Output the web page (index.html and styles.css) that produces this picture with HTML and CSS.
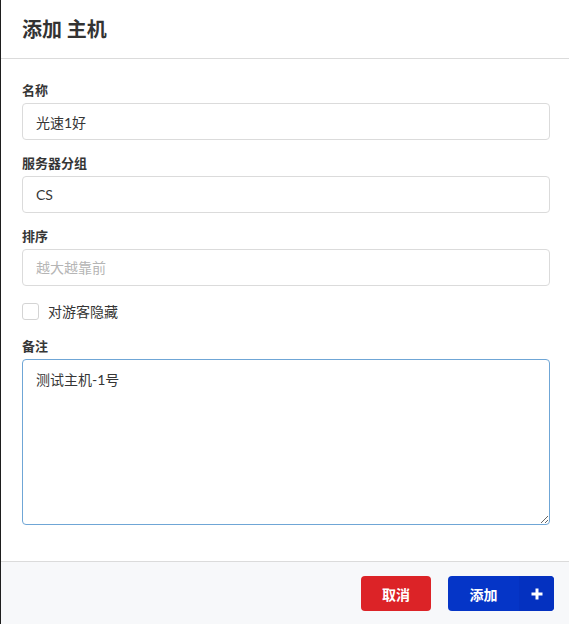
FILE: index.html
```html
<!DOCTYPE html>
<html lang="zh">
<head>
<meta charset="utf-8">
<title>添加 主机</title>
<link rel="stylesheet" href="styles.css">
</head>
<body>
<div class="modal">
  <header class="modal-head">
    <h1 class="modal-title">添加 主机</h1>
  </header>
  <section class="modal-body">
    <div class="field">
      <label class="label">名称</label>
      <input class="input" type="text" value="光速1好">
    </div>
    <div class="field">
      <label class="label">服务器分组</label>
      <input class="input" type="text" value="CS">
    </div>
    <div class="field">
      <label class="label">排序</label>
      <input class="input" type="text" placeholder="越大越靠前">
    </div>
    <div class="field">
      <label class="check">
        <span class="check-box"></span>
        <span class="check-text">对游客隐藏</span>
      </label>
    </div>
    <div class="field">
      <label class="label">备注</label>
      <textarea class="textarea">测试主机-1号</textarea>
    </div>
  </section>
  <footer class="modal-foot">
    <button class="btn btn-cancel" type="button">取消</button>
    <button class="btn btn-add" type="button">
      <span class="btn-text">添加</span>
      <span class="btn-icon">
        <svg width="12" height="12" viewBox="0 0 12 12"><path d="M6 0.5v11M0.5 6h11" stroke="#fff" stroke-width="3" fill="none"/></svg>
      </span>
    </button>
  </footer>
</div>
</body>
</html>
```
FILE: styles.css
```css
* { box-sizing: border-box; }
html, body {
  margin: 0;
  padding: 0;
  background: #fff;
}
body {
  font-family: "Lato", "Noto Sans CJK SC", sans-serif;
  color: #363636;
}
.modal {
  width: 569px;
  height: 624px;
  border-left: 1px solid #1e1e1e;
  display: flex;
  flex-direction: column;
  background: #fff;
}
.modal-head {
  height: 59px;
  border-bottom: 1px solid #dbdbdb;
  padding: 0 21px;
  display: flex;
  align-items: center;
}
.modal-title {
  margin: 0;
  font-size: 20px;
  font-weight: 700;
  color: #333;
  line-height: 1;
}
.modal-body {
  flex: 1;
  padding: 21px 19px 0 21px;
  display: flex;
  flex-direction: column;
  gap: 13px;
}
.field {
  display: flex;
  flex-direction: column;
}
.label {
  font-size: 13px;
  font-weight: 700;
  line-height: 20px;
  margin-bottom: 3px;
  color: #363636;
}
.input, .textarea {
  font-family: inherit;
  font-size: 14px;
  color: #363636;
  border: 1px solid #dbdbdb;
  border-radius: 4px;
  background: #fff;
  padding: 0 13px;
  outline: none;
  width: 100%;
}
.input {
  height: 37px;
}
.input::placeholder {
  color: #b5b5b5;
}
.textarea {
  height: 166px;
  padding: 10px 13px;
  border-color: #6fa6d6;
  line-height: 20px;
  resize: vertical;
  display: block;
}
.check {
  display: flex;
  align-items: center;
  height: 24px;
  gap: 9px;
  font-size: 14px;
}
.check-box {
  width: 17px;
  height: 17px;
  border: 1px solid #d4d4d4;
  border-radius: 3px;
  background: #fff;
}
.check-text {
  color: #363636;
}
.modal-foot {
  height: 63px;
  border-top: 1px solid #dbdbdb;
  background: #f7f8fa;
  padding: 14px 15px 0 0;
  display: flex;
  justify-content: flex-end;
  align-items: flex-start;
  gap: 17px;
}
.btn {
  height: 35px;
  border: none;
  border-radius: 4px;
  font-family: inherit;
  font-size: 14px;
  font-weight: 700;
  color: #fff;
  padding: 0;
  display: flex;
  align-items: center;
  justify-content: center;
}
.btn-cancel {
  width: 70px;
  background: #dc2327;
}
.btn-add {
  width: 106px;
  background: #0535c7;
  overflow: hidden;
}
.btn-text {
  flex: 1;
  text-align: center;
}
.btn-icon {
  width: 35px;
  height: 35px;
  background: #0431c0;
  display: flex;
  align-items: center;
  justify-content: center;
}
.btn-icon svg { display: block; }
```
